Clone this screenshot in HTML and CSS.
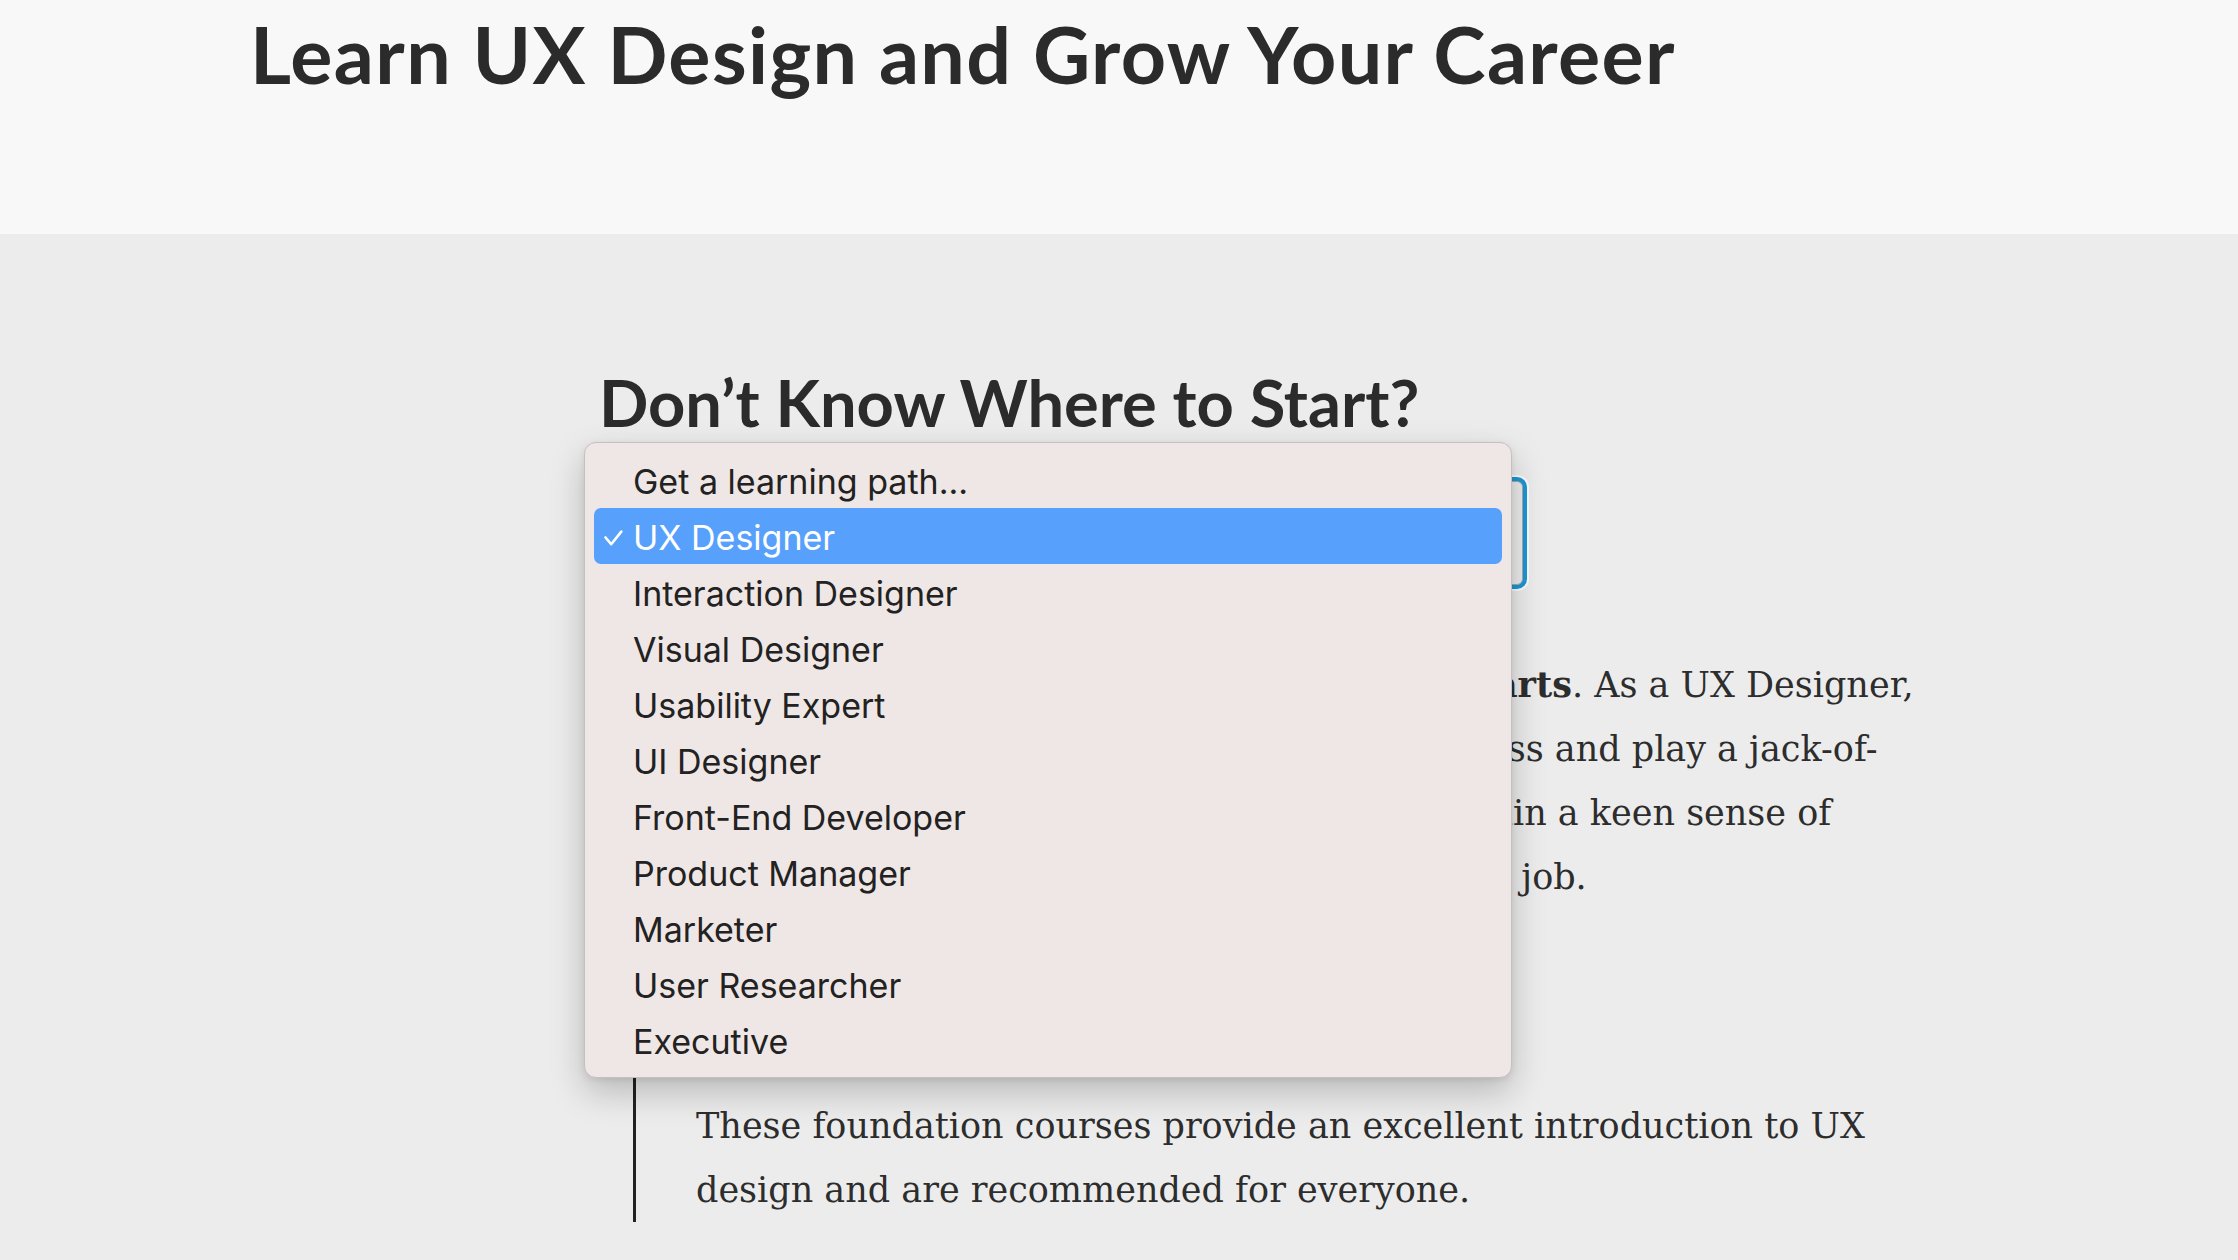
FILE: index.html
```html
<!DOCTYPE html>
<html lang="en">
<head>
  <meta charset="UTF-8">
  <meta name="viewport" content="width=device-width, initial-scale=1.0">
  <title>Learn UX Design and Grow Your Career</title>
  <link rel="stylesheet" href="styles.css">
</head>
<body>
  <header class="hero">
    <h1>Learn UX Design and Grow Your Career</h1>
  </header>

  <main class="paths">
    <h2>Don’t Know Where to Start?</h2>

    <div class="path-picker">
      <div class="select-box">UX Designer</div>
      <!-- open state of the learning path select -->
      <ul class="select-menu">
        <li>Get a learning path...</li>
        <li class="selected">
          <svg class="check" width="19" height="16" viewBox="0 0 19 16"><path d="M1.5 7.5 L7.2 14.2 L17.3 1.6" /></svg>
          UX Designer
        </li>
        <li>Interaction Designer</li>
        <li>Visual Designer</li>
        <li>Usability Expert</li>
        <li>UI Designer</li>
        <li>Front-End Developer</li>
        <li>Product Manager</li>
        <li>Marketer</li>
        <li>User Researcher</li>
        <li>Executive</li>
      </ul>
    </div>

    <p class="path-text">Good UX design is a blend of science and the fine <strong>arts</strong>. As a UX Designer, you will take part in every step of the design process and play a jack-of-all-trades role on the team. You will need to maintain a keen sense of empathy for your users if you are to succeed in the job.</p>

    <section class="course-group">
      <h3>Foundation Courses</h3>
      <p>These foundation courses provide an excellent introduction to UX design and are recommended for everyone.</p>
    </section>
  </main>
</body>
</html>
```

FILE: styles.css
```css
body {
  margin: 0;
  font-family: 'DejaVu Serif', serif;
  background-color: #ececec;
  color: #2d2d2d;
}
.hero {
  background-color: #f8f8f8;
  height: 234px;
  box-sizing: border-box;
  padding: 14px 0 0 250px;
}
.hero h1 {
  margin: 0;
  font-family: 'Lato', sans-serif;
  font-weight: 700;
  font-size: 79px;
  letter-spacing: 1.35px;
  line-height: 1;
  color: #2b2b2b;
}
.paths {
  margin-left: 603px;
  width: 1320px;
  padding-top: 136px;
  padding-bottom: 200px;
}
.paths h2 {
  margin: 0 0 0 -4px;
  font-family: 'Lato', sans-serif;
  font-weight: 700;
  font-size: 65px;
  line-height: 1;
  color: #2b2b2b;
}
.path-picker {
  position: relative;
  margin-top: 46px;
  width: 920px;
}
.select-box {
  height: 104px;
  box-sizing: border-box;
  border: 1px solid #a9a9a9;
  border-radius: 6px;
  background-color: #ececec;
  box-shadow: 0 0 0 4px #1b97d5, 0 0 0 6px rgba(255, 255, 255, 0.85);
  font-family: 'Inter', sans-serif;
  font-size: 34px;
  line-height: 102px;
  padding-left: 30px;
}
.select-menu {
  position: absolute;
  top: -39px;
  left: -19px;
  width: 928px;
  box-sizing: border-box;
  margin: 0;
  padding: 9px;
  list-style: none;
  background-color: #efe7e5;
  border: 1px solid #c6bfbd;
  border-radius: 12px;
  box-shadow: 0 14px 34px rgba(0, 0, 0, 0.22), 0 2px 6px rgba(0, 0, 0, 0.08);
  font-family: 'Inter', sans-serif;
  font-size: 34px;
  color: #222;
}
.select-menu li {
  position: relative;
  height: 56px;
  box-sizing: border-box;
  padding: 4px 0 0 39px;
  line-height: 52px;
  border-radius: 7px;
}
.select-menu li.selected {
  background-color: #57a0fc;
  color: #fff;
}
.check {
  position: absolute;
  left: 10px;
  top: 22px;
  fill: none;
  stroke: #fff;
  stroke-width: 2.6;
  stroke-linecap: round;
  stroke-linejoin: round;
}
.path-text {
  margin: 68px 0 0;
  font-size: 35px;
  line-height: 64px;
}
.course-group {
  margin: 60px 0 0 30px;
  border-left: 3px solid #222;
  padding-left: 60px;
}
.course-group h3 {
  margin: 0;
  font-family: 'Lato', sans-serif;
  font-size: 40px;
  line-height: 56px;
}
.course-group p {
  margin: 69px 0 0;
  font-size: 35px;
  line-height: 64px;
}
```
